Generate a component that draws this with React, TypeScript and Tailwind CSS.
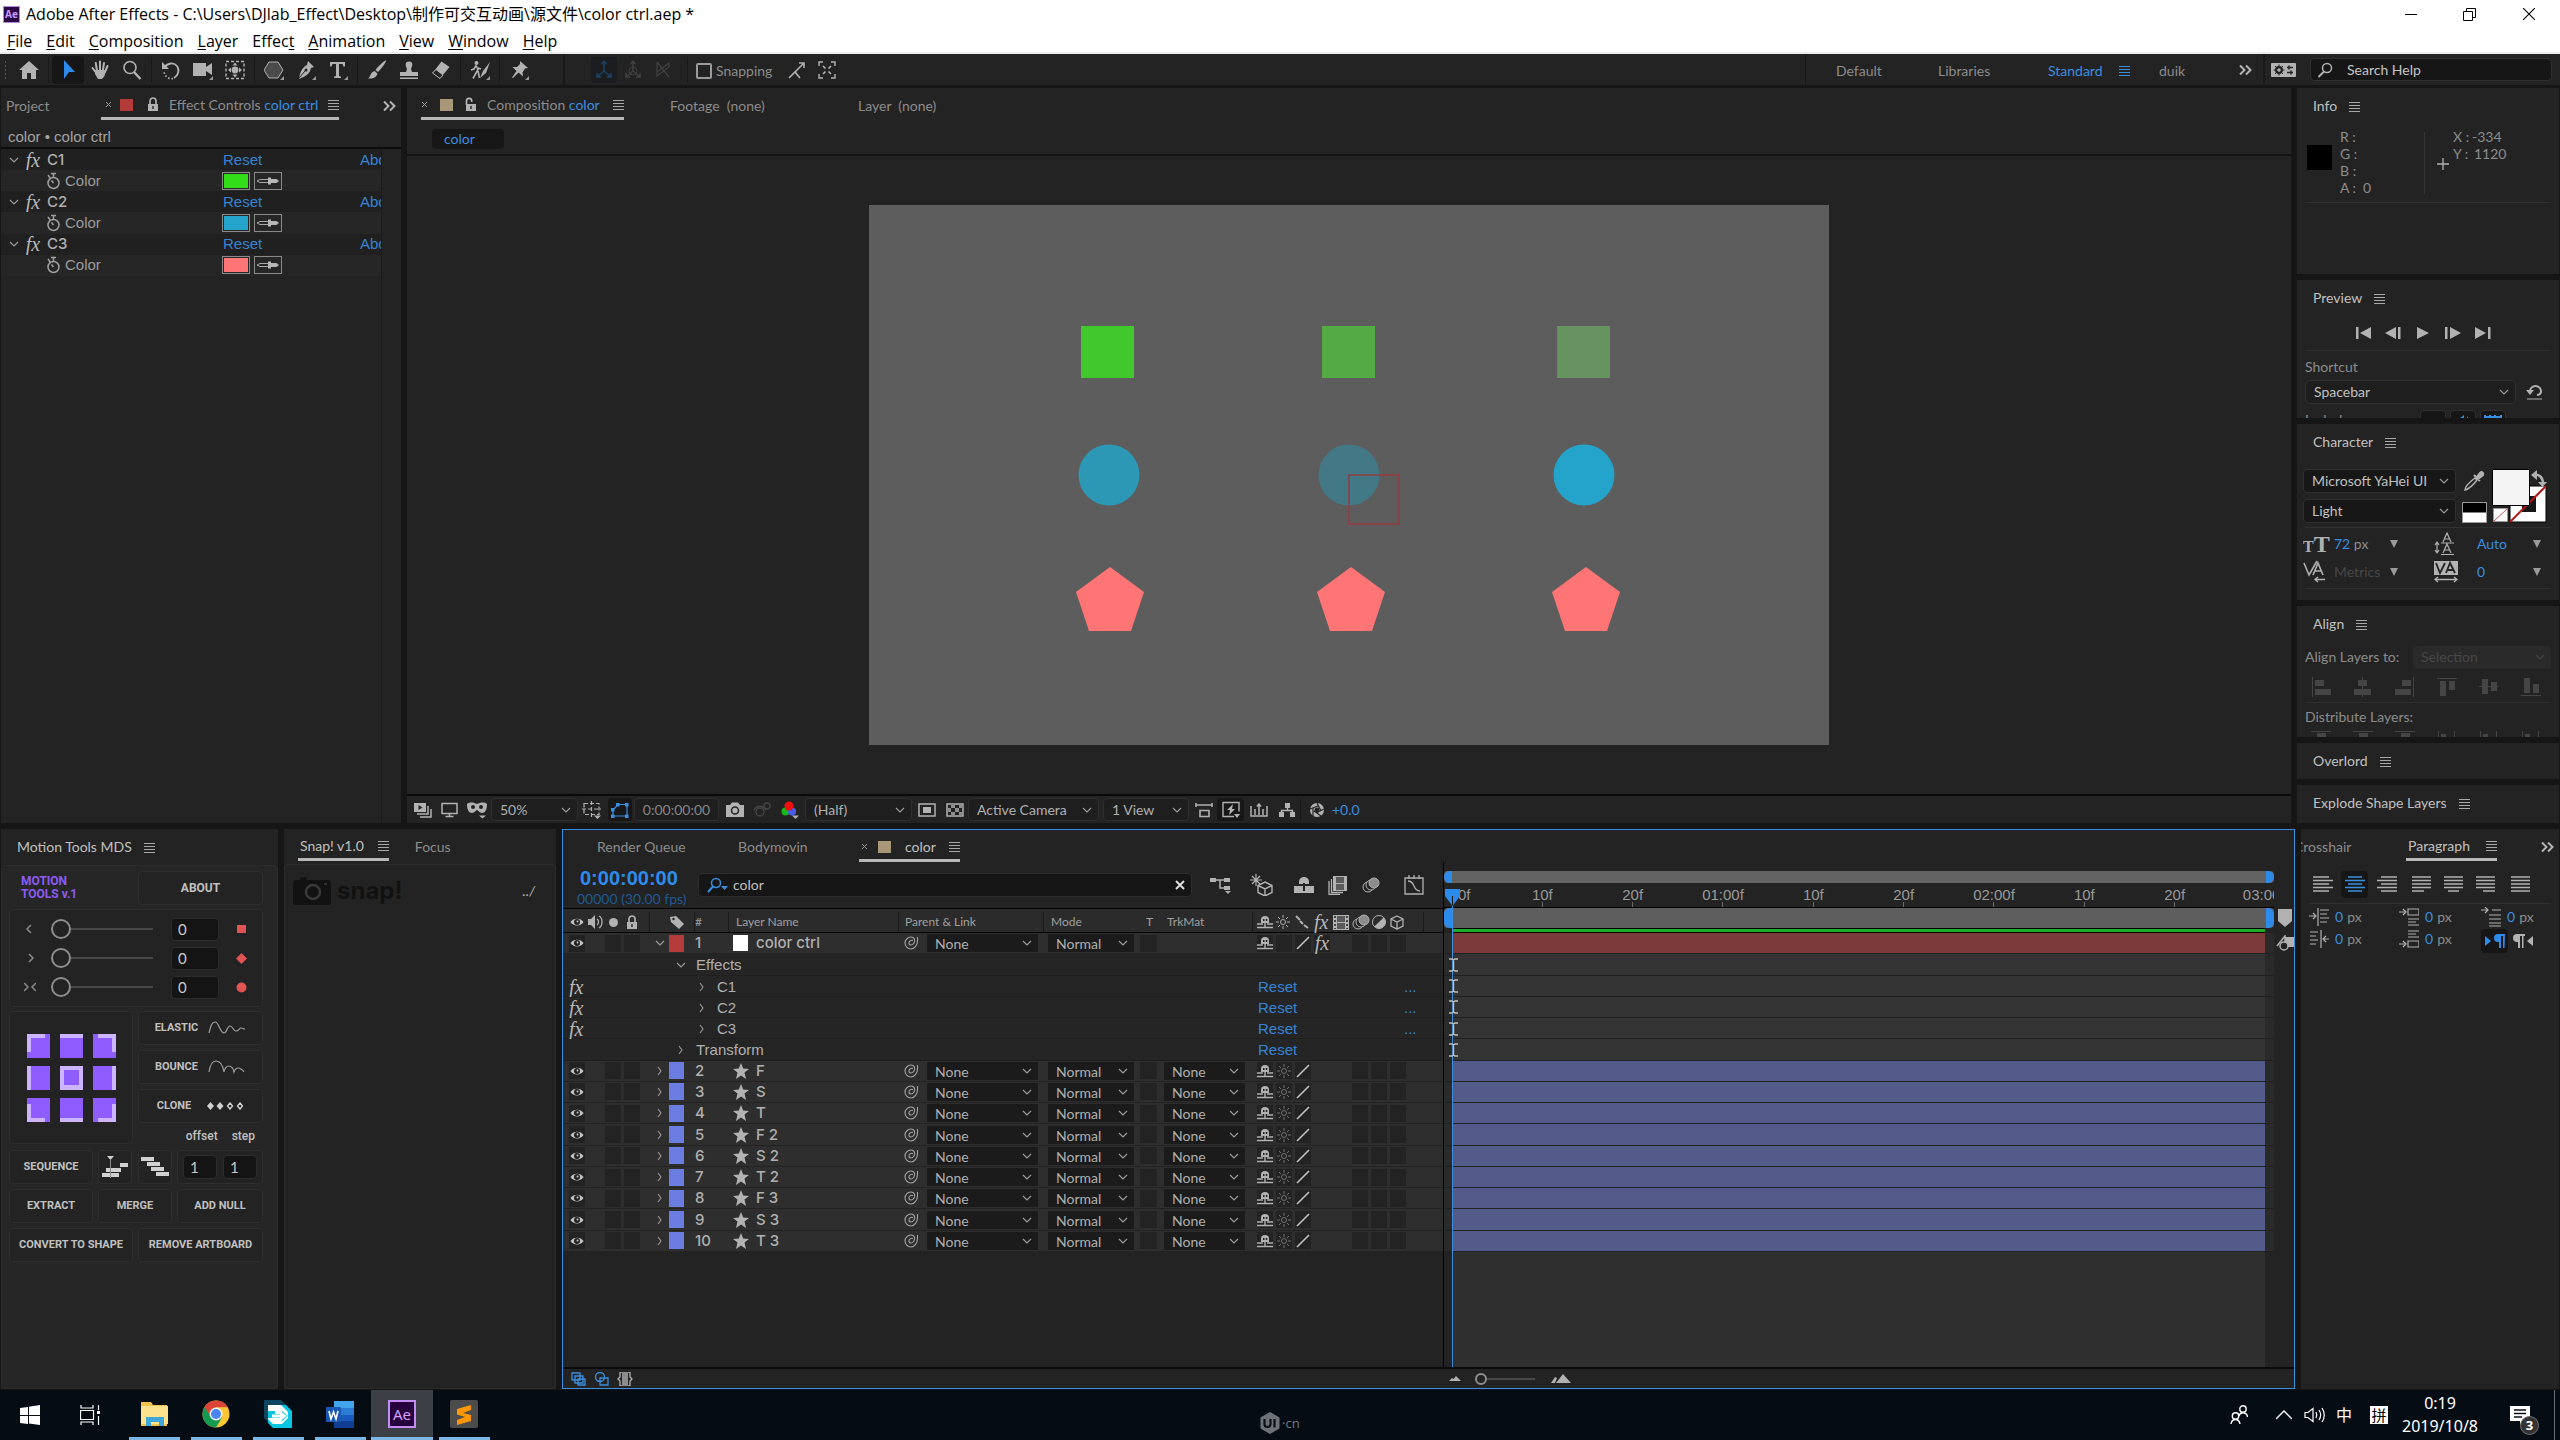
import type { ReactNode } from "react";

type IconProps = {
  w?: number;
  h?: number;
  className?: string;
  children?: ReactNode;
};

function Icon({ w = 20, h = 20, className = "", children }: IconProps) {
  return (
    <svg
      width={w}
      height={h}
      viewBox={`0 0 ${w} ${h}`}
      className={`shrink-0 ${className}`}
      fill="none"
      aria-hidden="true"
    >
      {children}
    </svg>
  );
}

const G = "#b2b2b2";

/* ---------- small shared pieces ---------- */

const MenuLines = ({ className = "text-[#a8a8a8]" }: { className?: string }) => (
  <Icon w={11} h={11} className={className}>
    <path d="M0 1.5h11M0 4.5h11M0 7.5h11M0 10.5h11" stroke="currentColor" />
  </Icon>
);

const Close = () => (
  <Icon w={7} h={7}>
    <path d="M1 1l5 5M6 1l-5 5" stroke="#9a9a9a" />
  </Icon>
);

const Chevron = ({ color = "#9a9a9a" }: { color?: string }) => (
  <Icon w={10} h={6}>
    <path d="M1 1l4 4 4-4" stroke={color} strokeWidth="1.2" />
  </Icon>
);

const ChevronRight = () => (
  <Icon w={6} h={10}>
    <path d="M1 1l3 4-3 4" stroke="#9a9a9a" strokeWidth="1.1" />
  </Icon>
);

const More = () => (
  <Icon w={14} h={12}>
    <path d="M1 1.5l4.5 4.5L1 10.5M7 1.5l4.5 4.5L7 10.5" stroke="#b4b4b4" strokeWidth="2" />
  </Icon>
);

const Corner = () => <path d="M20 16v4h-4z" fill="#9a9a9a" />;

const Lock = ({ open = false }: { open?: boolean }) => (
  <Icon w={12} h={15}>
    <path d={open ? "M1.5 8V4a2.6 2.6 0 015.2 0v1" : "M3 7V4a3 3 0 016 0v3"} stroke={G} strokeWidth="1.7" />
    <rect x="1" y="7" width="10" height="7" fill={G} />
    <path d="M6 9v3" stroke="#232323" strokeWidth="1.4" />
  </Icon>
);

const Fx = () => (
  <span className="font-['Liberation_Serif',serif] text-xl leading-none italic text-[#b8b8b8]">fx</span>
);

const Eye = () => (
  <Icon w={14} h={10}>
    <path d="M.5 5C3 .5 11 .5 13.5 5 11 9.5 3 9.5.5 5z" fill="#c4c4c4" />
    <circle cx="7" cy="5" r="3" fill="#232323" />
    <circle cx="7.5" cy="4.5" r="1" fill="#c4c4c4" />
  </Icon>
);

const Magnifier = () => (
  <Icon w={16} h={16}>
    <circle cx="10" cy="6" r="4.5" stroke={G} strokeWidth="1.5" />
    <path d="M7 9.5L1.5 15" stroke={G} strokeWidth="2" />
  </Icon>
);

type SelectProps = {
  label: string;
  value: string;
  className: string;
  color?: string;
};

function Select({ label, value, className, color }: SelectProps) {
  return (
    <span className={`relative flex items-center ${className}`}>
      <select
        aria-label={label}
        defaultValue={value}
        className="h-full w-full appearance-none bg-transparent pl-2 outline-none"
      >
        <option>{value}</option>
      </select>
      <span className="pointer-events-none absolute right-1.5">
        <Chevron color={color} />
      </span>
    </span>
  );
}

function PanelTitle({ title }: { title: string }) {
  return (
    <div className="flex h-9 shrink-0 items-center gap-3 pl-4 text-[#c0c0c0]">
      <h2>{title}</h2>
      <button type="button" aria-label={`${title} menu`}>
        <MenuLines />
      </button>
    </div>
  );
}

/* ---------- title bar and menus ---------- */

const menus = [
  ["", "F", "ile"],
  ["", "E", "dit"],
  ["", "C", "omposition"],
  ["", "L", "ayer"],
  ["Effec", "t", ""],
  ["", "A", "nimation"],
  ["", "V", "iew"],
  ["", "W", "indow"],
  ["", "H", "elp"],
];

function TitleBar() {
  return (
    <header className="h-[54px] border-b-2 border-[#ececec] bg-white font-['Open_Sans','Noto_Sans_CJK_SC',sans-serif] text-base text-black">
      <div className="flex h-7 items-center">
        <span className="ml-[3px] flex size-[17px] items-center justify-center border border-[#b48ae0] bg-[#2a0845] text-[10px] font-bold text-[#c99bff]">
          Ae
        </span>
        <h1 className="ml-1.5">
          Adobe After Effects - C:\Users\DJlab_Effect\Desktop\制作可交互动画\源文件\color ctrl.aep *
        </h1>
        <div className="ml-auto flex items-center">
          <button type="button" aria-label="Minimize" className="flex w-[58px] justify-center">
            <Icon w={12} h={12}>
              <path d="M0 6.5h12" stroke="#000" />
            </Icon>
          </button>
          <button type="button" aria-label="Restore" className="flex w-[58px] justify-center">
            <Icon w={13} h={13}>
              <path d="M.5 3.5h9v9h-9zM3.5 3.5v-3h9v9h-3" stroke="#000" />
            </Icon>
          </button>
          <button type="button" aria-label="Close" className="flex w-[62px] justify-center">
            <Icon w={12} h={12}>
              <path d="M0 0l12 12M12 0L0 12" stroke="#000" strokeWidth="1.1" />
            </Icon>
          </button>
        </div>
      </div>
      <nav className="flex h-6 items-center gap-3.5 pt-0.5 pl-[7px]">
        {menus.map(([a, b, c]) => (
          <button type="button" key={a + b + c}>
            {a}
            <span className="underline underline-offset-2">{b}</span>
            {c}
          </button>
        ))}
      </nav>
    </header>
  );
}

/* ---------- tool bar ---------- */

const toolGroups: { name: string; art: ReactNode; on?: boolean }[][] = [
  [
    {
      name: "Selection",
      on: true,
      art: <path d="M6 0l11 12h-6l-5 7z" fill="#2d8ceb" />,
    },
    {
      name: "Hand",
      art: (
        <>
          <path d="M5.5 12L2.500 8M7 11L5.800 3M10 10.500V1.500M12.800 11l1.200-8M15 12l2.500-6" stroke={G} strokeWidth="2" strokeLinecap="round" />
          <path d="M5 10h11l-1.500 6-2.500 3H8l-3-5z" fill={G} />
        </>
      ),
    },
    {
      name: "Zoom",
      art: (
        <>
          <circle cx="8" cy="7.5" r="6" stroke={G} strokeWidth="1.6" />
          <path d="M12 12l6.500 7" stroke={G} strokeWidth="2.4" />
        </>
      ),
    },
  ],
  [
    {
      name: "Rotation",
      art: (
        <>
          <path d="M4 7a7.500 7.500 0 0112-1c3 4 1 10-3 12" stroke={G} strokeWidth="1.8" />
          <path d="M12 18.500c-4 1-9-2-9-8" stroke={G} strokeWidth="1.8" strokeDasharray="1.5 2" />
          <path d="M1 2v7h7z" fill={G} />
        </>
      ),
    },
    {
      name: "Unified Camera",
      art: (
        <>
          <path d="M0 3h13v4l6-4v12l-6-4v5H0z" fill={G} />
          <Corner />
        </>
      ),
    },
    {
      name: "Pan Behind",
      art: (
        <>
          <rect x="1" y="1.5" width="18" height="17" stroke={G} strokeWidth="1.4" strokeDasharray="3 2" />
          <circle cx="10" cy="10" r="3.4" fill={G} />
          <path d="M10 2.500l2.500 3h-5zM10 17.500l2.500-3h-5zM3 10l3-2.500v5zM17 10l-3-2.500v5z" fill={G} />
        </>
      ),
    },
  ],
  [
    {
      name: "Shape",
      art: (
        <>
          <path d="M5 2h9l5 8-5 8H5l-5-8z" fill="#4b4b4b" stroke={G} />
          <Corner />
        </>
      ),
    },
    {
      name: "Pen",
      art: (
        <>
          <path d="M12 1l6 6-3 1c-1 5-4 8-12 11 1-8 4-12 8-14z" fill={G} />
          <path d="M3 18l6-7" stroke="#232323" />
          <circle cx="10" cy="10" r="1.5" fill="#232323" />
          <Corner />
        </>
      ),
    },
    {
      name: "Type",
      art: (
        <>
          <path d="M2 2h15v4.500h-1.500L14.500 4H11v12l2 .8V18H6v-1.200L8 16V4H4.500l-1 2.500H2z" fill={G} />
          <Corner />
        </>
      ),
    },
  ],
  [
    {
      name: "Brush",
      art: (
        <path d="M19 .5c1 1-6 10-8 11.500L8.500 10C10.500 7 18-.3 19 .5zM7.500 11l3 2.500c-1 4-5 5.500-9.500 5 3-2 2-6 6.500-7.500z" fill={G} />
      ),
    },
    {
      name: "Clone Stamp",
      art: <path d="M8 9C6 5 6 1.500 10 1.500S14 5 12 9l1 3h6v4H1v-4h6zM1 17.500h18V19H1z" fill={G} />,
    },
    {
      name: "Eraser",
      art: (
        <>
          <path d="M10.500 1.500l8 5.500L9 18.500 1.500 13z" fill={G} />
          <path d="M5 9.500l7 5.500-3 3.500L1.500 13z" fill="#232323" stroke={G} />
        </>
      ),
    },
  ],
  [
    {
      name: "Roto Brush",
      art: (
        <>
          <circle cx="6.5" cy="3" r="2" fill={G} />
          <path d="M6 5.500L4 9 1 10M6 5.500l2 4-5 9M8 11l1.500 7M8 8l3 1" stroke={G} strokeWidth="1.6" />
          <path d="M20 2l-7 9-3 7 6-5z" fill={G} />
          <Corner />
        </>
      ),
    },
  ],
  [
    {
      name: "Puppet Pin",
      art: (
        <>
          <path d="M11 1l8 7-3 .5-2.500 4 .5 4-4.500-4L4 18l-1-.5 4.500-6.500L3.500 7l4.500 0L11 4z" fill={G} />
          <Corner />
        </>
      ),
    },
  ],
];

const Sep = () => <span className="mx-[3px] h-[26px] w-px bg-[#191919]" />;

function ToolBar() {
  return (
    <div className="flex h-[31px] items-center bg-[#232323] text-[#8c8c8c]">
      <span className="ml-1 h-5 w-[3px] bg-[radial-gradient(#555_1px,transparent_1px)] bg-[size:3px_4px]" />
      <button type="button" aria-label="Home" className="ml-1.5 flex h-7 w-8 items-center justify-center">
        <Icon>
          <path d="M10 1l10 9h-3v9h-5v-6H8v6H3v-9H0z" fill={G} />
        </Icon>
      </button>
      {toolGroups.map((group, i) => (
        <div key={i} className="flex items-center">
          <Sep />
          {group.map((tool) => (
            <button
              type="button"
              key={tool.name}
              aria-label={tool.name}
              className={`flex h-7 w-8 items-center justify-center ${tool.on ? "rounded-sm bg-[#161616]" : ""}`}
            >
              <Icon>{tool.art}</Icon>
            </button>
          ))}
        </div>
      ))}
      <span className="ml-7 h-[31px] w-0.5 bg-[#191919]" />
      <span className="ml-[26px] flex h-[26px] w-[26px] items-center justify-center rounded-sm bg-[#1b1d20]">
        <Icon>
          <path d="M10 11V2M10 11l-7 6M10 11l7 6M7.500 4L10 1l2.500 3M3 13v4h4M17 13v4h-4" stroke="#1d4468" strokeWidth="1.4" />
        </Icon>
      </span>
      <Icon className="ml-1.5">
        <path d="M10 11V2M10 11l-7 6M10 11l7 6M7.500 4L10 1l2.500 3M3 13v4h4M17 13v4h-4" stroke="#424242" strokeWidth="1.3" />
        <circle cx="10" cy="11" r="4" stroke="#424242" />
      </Icon>
      <Icon className="ml-2.5">
        <path d="M4 2l12 15M4 2v14l12-9V3L4 12" stroke="#424242" strokeWidth="1.3" />
      </Icon>
      <span className="ml-3.5 h-[26px] w-px bg-[#191919]" />
      <label className="ml-2 flex items-center gap-1 pt-0.5">
        <input type="checkbox" className="size-4 appearance-none rounded-[2px] border-2 border-[#9a9a9a]" />
        Snapping
      </label>
      <Icon w={18} h={18} className="ml-4">
        <path d="M1 17l6-6 5 6M7 11l8-8M11 2h5v5" stroke={G} strokeWidth="1.6" />
      </Icon>
      <Icon w={18} h={18} className="ml-3">
        <path d="M1 5V1h4M13 1h4v4M17 13v4h-4M5 17H1v-4" stroke={G} strokeWidth="1.4" />
        <path d="M5 5l2.500 2.500M13 5l-2.500 2.500M5 13l2.500-2.500M13 13l-2.500-2.500" stroke={G} strokeWidth="1.6" />
      </Icon>

      <nav className="ml-auto flex items-center">
        <span className="h-[31px] w-px bg-[#191919]" />
        <button type="button" className="ml-[30px] w-[102px] pt-0.5 text-left">Default</button>
        <button type="button" className="w-[110px] pt-0.5 text-left">Libraries</button>
        <button type="button" className="flex w-[111px] items-center gap-4 pt-0.5 text-[#3a8ee0]">
          Standard
          <MenuLines className="text-[#3a8ee0]" />
        </button>
        <button type="button" className="w-20 pt-0.5 text-left">duik</button>
        <button type="button" aria-label="More workspaces">
          <More />
        </button>
        <span className="ml-2.5 h-[31px] w-0.5 bg-[#191919]" />
        <button type="button" aria-label="Sync settings" className="ml-1.5">
          <Icon w={25} h={14}>
            <rect width="25" height="14" rx="1" fill={G} />
            <circle cx="8" cy="7" r="3" stroke="#232323" strokeWidth="2" />
            <path d="M8 1.500v11M2.500 7h11M4 3l8 8M12 3l-8 8" stroke="#232323" />
            <circle cx="8" cy="7" r="1.6" fill={G} />
            <path d="M16 4.500h6M16 9.500h6M18 2.500v4M20 7.500v4" stroke="#232323" strokeWidth="1.5" />
          </Icon>
        </button>
        <label className="mr-2 ml-3.5 flex h-[23px] w-[242px] items-center gap-3.5 rounded-sm border border-[#303030] bg-[#161616] pl-1.5">
          <Magnifier />
          <input
            type="text"
            aria-label="Search Help"
            placeholder="Search Help"
            className="w-40 bg-transparent outline-none placeholder:text-[#c4c4c4]"
          />
        </label>
      </nav>
    </div>
  );
}

/* ---------- effect controls ---------- */

const effects = [
  { name: "C1", swatch: "bg-[#32de18]" },
  { name: "C2", swatch: "bg-[#24a3cb]" },
  { name: "C3", swatch: "bg-[#ff7474]" },
];

function EffectControls() {
  return (
    <section className="flex w-[400px] shrink-0 flex-col bg-[#232323]">
      <div className="flex h-9 items-start pl-[5px] text-[#8c8c8c]">
        <button type="button" className="h-8 w-[95px] pt-1 text-left">Project</button>
        <div className="flex h-8 items-center border-b-[3px] border-[#b8b8b8] pt-1 pl-1">
          <Close />
          <span className="ml-2 h-3 w-[13px] bg-[#b53b3b]" />
          <span className="ml-3.5">
            <Lock />
          </span>
          <h2 className="ml-2.5 w-[149px] whitespace-nowrap">
            Effect Controls <span className="text-[#3a8ee0]">color ctrl</span>
          </h2>
          <span className="ml-2.5">
            <MenuLines />
          </span>
        </div>
        <button type="button" aria-label="More panels" className="mt-3 mr-1 ml-auto">
          <More />
        </button>
      </div>
      <div className="flex h-[25px] items-center border-b-2 border-[#0c0c0c] pt-0.5 pl-[7px] font-['Liberation_Sans',sans-serif] text-[15px] text-[#a4a4a4]">
        color • color ctrl
      </div>
      <div className="flex flex-1">
        <div className="grid h-[127px] w-[380px] auto-rows-fr overflow-hidden font-['Liberation_Sans',sans-serif] text-[15px] text-[#9c9c9c]">
          {effects.map((fx) => [
            <div key={fx.name} className="flex items-center bg-[#202020] pl-2">
              <Chevron />
              <span className="ml-1 flex w-5 justify-center">
                <Fx />
              </span>
              <span className="ml-1 w-44 font-['Inter',sans-serif] font-medium text-[#b0b0b0]">{fx.name}</span>
              <button type="button" className="w-[137px] text-left text-[#3584d4]">Reset</button>
              <button type="button" className="w-[21px] overflow-hidden text-left text-[#3584d4]">Abo</button>
            </div>,
            <div key={`${fx.name}-color`} className="flex items-center bg-[#262626] pl-11">
              <Icon w={16} h={18}>
                <circle cx="8.5" cy="11" r="5.5" stroke="#a0a0a0" strokeWidth="1.5" />
                <path d="M8.500 5V2M6 1.500h5M3 3l2.500 3.500M8.500 11l-2-2.500" stroke="#a0a0a0" strokeWidth="1.5" />
              </Icon>
              <span className="ml-1 w-[157px]">Color</span>
              <button type="button" aria-label={`${fx.name} color`} className="h-[18px] w-7 border border-[#8a8a8a] p-px">
                <span className={`block size-full ${fx.swatch}`} />
              </button>
              <button type="button" aria-label={`${fx.name} eyedropper`} className="ml-1 flex h-[18px] w-7 items-center justify-center border border-[#8a8a8a]">
                <Icon w={24} h={10}>
                  <path d="M1 5l3-1.500h9v3H4z" stroke="#a8a8a8" />
                  <path d="M12 1.500h3V3h5a2 2 0 010 4h-5v1.500h-3zM20 4.500h3v1h-3z" fill="#b8b8b8" />
                </Icon>
              </button>
            </div>,
          ])}
        </div>
        <span className="w-px bg-[#1b1b1b]" />
      </div>
    </section>
  );
}

/* ---------- composition viewer ---------- */

const pentagon = "0,0 34,25 21,64 -21,64 -34,25";

function Viewer() {
  return (
    <section className="flex min-w-0 flex-1 flex-col bg-[#232323] text-[#8c8c8c]">
      <div className="flex h-9 items-start pl-3.5">
        <div className="flex h-8 items-center border-b-[3px] border-[#b8b8b8] pt-1">
          <Close />
          <span className="ml-3 h-3 w-[13px] bg-[#a89878]" />
          <span className="ml-3">
            <Lock open />
          </span>
          <h2 className="ml-2.5 w-[114px] whitespace-nowrap">
            Composition <span className="text-[#3a8ee0]">color</span>
          </h2>
          <span className="ml-3">
            <MenuLines />
          </span>
        </div>
        <button type="button" className="ml-[46px] h-8 w-[188px] pt-1 text-left">Footage &nbsp;(none)</button>
        <button type="button" className="h-8 pt-1">Layer &nbsp;(none)</button>
      </div>
      <div className="flex h-8 items-center border-b-2 border-[#141414] pl-[25px]">
        <button type="button" className="h-5 w-[72px] rounded-sm bg-[#171717] pl-3 text-left text-[#3a8ee0]">
          color
        </button>
      </div>
      <div className="flex flex-1 items-center justify-center border-b-2 border-[#0a0a0a]">
        <svg viewBox="0 0 960 540" className="w-[960px] bg-[#5d5d5d]" role="img" aria-label="Composition frame">
          <rect x="212" y="121" width="53" height="52" fill="#41c82c" />
          <rect x="453" y="121" width="53" height="52" fill="#54ab45" />
          <rect x="688" y="121" width="53" height="52" fill="#66935f" />
          <circle cx="240" cy="270" r="30.5" fill="#2c98b6" />
          <circle cx="480" cy="270" r="30.5" fill="#437887" />
          <circle cx="715" cy="270" r="30.5" fill="#24a3cb" />
          {[241, 482, 717].map((x) => (
            <polygon key={x} points={pentagon} transform={`translate(${x} 362)`} fill="#ff7474" />
          ))}
          <rect x="480" y="270" width="50" height="49" fill="none" stroke="#943c42" strokeWidth="1.5" />
        </svg>
      </div>
      <ViewerBar />
    </section>
  );
}

const barField = "h-[23px] rounded-sm border border-[#2e2e2e] bg-[#1e1e1e]";

function ViewerBar() {
  return (
    <div className="flex h-[27px] items-center pl-1.5 text-[#b0b0b0]">
      <Icon w={20} h={16}>
        <path d="M1 1h12v9H1z" fill={G} />
        <path d="M5.500 3l4 2.500-4 2.500z" fill="#232323" />
        <path d="M15 4v8H4M18 7v8H7" stroke={G} strokeWidth="1.5" />
      </Icon>
      <Icon w={18} h={16} className="ml-2">
        <path d="M1 1.500h15v10H1zM8.500 12v2M4.500 14.500h8" stroke={G} strokeWidth="1.5" />
      </Icon>
      <Icon w={22} h={18} className="ml-2">
        <path d="M0 3c3-2.500 7-1.500 10 0 3-1.500 7-2.500 10 0 0 6-2 9-5 9-2.500 0-4-3-5-3s-2.500 3-5 3C2 12 0 9 0 3z" fill={G} />
        <circle cx="6" cy="6" r="2" fill="#232323" />
        <circle cx="14" cy="6" r="2" fill="#232323" />
        <path d="M12 14.500h7l-3.500 3z" fill={G} />
      </Icon>
      <Select label="Magnification" value="50%" className={`ml-0.5 w-[87px] ${barField}`} />
      <Icon w={20} h={18} className="ml-1">
        <path d="M2 2.500h15v11H2zM9.500 0v16M0 8h19" stroke={G} strokeWidth="1.2" strokeDasharray="4 2" />
        <path d="M12 14.500h7l-3.500 3.500z" fill={G} />
      </Icon>
      <span className="ml-1.5 flex h-[23px] w-6 items-center justify-center rounded-sm bg-[#171717]">
        <Icon w={18} h={16}>
          <path d="M2 14V8l5-5.500h9V14z" stroke="#3a8ee0" strokeWidth="1.2" />
          <path d="M0 12.500h3.500V16H0zM0 6h3.500v3.500H0zM5 1h3.500v3.500H5zM14 1h3.500v3.500H14zM14 12.500h3.500V16H14z" fill="#3a8ee0" />
        </Icon>
      </span>
      <button type="button" className={`ml-0.5 w-[85px] text-[#858585] ${barField}`}>
        0:00:00:00
      </button>
      <Icon w={20} h={16} className="ml-1.5">
        <path d="M1 3h4l2-2.500h6L15 3h4v12H1z" fill={G} />
        <circle cx="10" cy="8.5" r="3.5" stroke="#232323" strokeWidth="1.5" />
      </Icon>
      <Icon w={20} h={16} className="ml-2">
        <circle cx="7" cy="10" r="4" stroke="#454545" strokeWidth="1.5" />
        <circle cx="14" cy="4" r="3" stroke="#454545" strokeWidth="1.5" />
        <path d="M1 8c3-5 9-5 12 0" stroke="#454545" strokeWidth="1.5" />
      </Icon>
      <Icon w={18} h={18} className="ml-2">
        <circle cx="4.5" cy="10.5" r="4" fill="#18b818" />
        <circle cx="11" cy="10.5" r="4" fill="#4a5bf0" />
        <circle cx="8" cy="5" r="4.5" fill="#f01010" />
        <path d="M11 14.500h7l-3.500 3.500z" fill={G} />
      </Icon>
      <Select label="Resolution" value="(Half)" className={`ml-1.5 w-[107px] ${barField}`} />
      <Icon w={18} h={14} className="ml-1.5">
        <rect x="1" y="1" width="16" height="12" stroke={G} strokeWidth="1.5" />
        <rect x="5" y="4" width="8" height="6" fill={G} />
      </Icon>
      <Icon w={18} h={14} className="ml-2.5">
        <rect x="1" y="1" width="16" height="12" stroke={G} strokeWidth="1.5" />
        <path d="M5 2h4v3H5zM13 2h3v3h-3zM2 5h3v4H2zM9 5h4v4H9zM5 9h4v3H5zM13 9h3v3h-3z" fill="#8e8e8e" />
      </Icon>
      <Select label="3D view" value="Active Camera" className={`ml-1 w-[131px] ${barField}`} />
      <Select label="View layout" value="1 View" className={`ml-1 w-[86px] ${barField}`} />
      <Icon w={18} h={16} className="ml-1.5">
        <path d="M1 3h16M1 1v4M17 1v4M5 8.500h9v6H5z" stroke={G} strokeWidth="1.6" />
      </Icon>
      <span className="ml-1 flex h-[23px] w-[27px] items-center justify-center rounded-sm bg-[#171717]">
        <Icon w={18} h={17}>
          <path d="M12 15.500H1v-14h16v9" stroke={G} strokeWidth="1.4" />
          <path d="M11 3L5 9h3l-1 5 6-6h-3z" fill={G} />
          <path d="M12 13h6l-3 4z" fill={G} />
        </Icon>
      </span>
      <Icon w={18} h={14} className="ml-1.5">
        <path d="M1 3v10h16V3M5 6v6M9 1v11M13 6v6M7 3.500L9 1l2 2.500" stroke={G} strokeWidth="1.5" />
      </Icon>
      <Icon w={18} h={16} className="ml-2.5">
        <path d="M7 1h5v5H7zM1 10h5v5H1zM12 10h5v5h-5z" fill={G} />
        <path d="M9.500 6v2.500M3.500 11V8.500h11V11" stroke={G} strokeWidth="1.4" />
      </Icon>
      <span className="ml-1 h-[23px] w-px bg-[#191919]" />
      <Icon w={16} h={16} className="ml-2">
        <circle cx="8" cy="8" r="7" fill={G} />
        <path d="M8 1l4 8M15 7l-8 4M12 14L5 9M4 14l0-8M1 7l8-3" stroke="#232323" strokeWidth="1.2" />
        <circle cx="8" cy="8" r="2.5" fill="#232323" />
      </Icon>
      <button type="button" className="ml-[7px] text-[#3a8ee0]">+0.0</button>
    </div>
  );
}

/* ---------- right column ---------- */

const Rule = () => <hr className="mx-2 border-[#303030]" />;

const transport: { name: string; d: string }[] = [
  { name: "First frame", d: "M1 1h2.5v12H1zM16 1v12L5 7z" },
  { name: "Previous frame", d: "M11 1v12L0 7zM13 1h2.5v12H13z" },
  { name: "Play", d: "M2 1l12 6-12 6z" },
  { name: "Next frame", d: "M0 1h2.5v12H0zM5 1l11 6-11 6z" },
  { name: "Last frame", d: "M0 1l11 6-11 6zM13 1h2.5v12H13z" },
];

const alignArt = [
  "M1 0h1v20H1zM4 3h9v6H4zM4 12h16v6H4z",
  "M9 0h1v20H9zM5 3h9v6H5zM1 12h17v6H1z",
  "M18 0h1v20h-1zM7 3h9v6H7zM0 12h16v6H0z",
  "M0 1h20v1H0zM3 4h6v15H3zM12 4h6v9h-6z",
  "M0 9h20v1H0zM3 2h6v15H3zM12 5h6v9h-6z",
  "M0 18h20v1H0zM3 1h6v15H3zM12 7h6v9h-6z",
];

function SideColumn() {
  return (
    <aside className="flex w-[262px] shrink-0 flex-col gap-1.5 text-[#8c8c8c]">
      <section className="h-[186px] bg-[#232323]">
        <PanelTitle title="Info" />
        <div className="flex h-[78px] pt-1">
          <span className="mt-[17px] ml-2.5 size-[25px] bg-black" />
          <dl className="ml-2 grid w-[84px] grid-cols-[23px_1fr] content-start leading-[17px]">
            <dt>R :</dt>
            <dd />
            <dt>G :</dt>
            <dd />
            <dt>B :</dt>
            <dd />
            <dt>A :</dt>
            <dd>0</dd>
          </dl>
          <span className="mt-1 h-[62px] w-px bg-[#343434]" />
          <Icon w={12} h={12} className="mt-[30px] ml-3">
            <path d="M0 6h12M6 0v12" stroke={G} strokeWidth="1.3" />
          </Icon>
          <dl className="ml-1 grid grid-cols-[19px_1fr] content-start leading-[17px]">
            <dt>X :</dt>
            <dd>-334</dd>
            <dt>Y :</dt>
            <dd className="pl-0.5">1120</dd>
          </dl>
        </div>
        <Rule />
      </section>

      <section className="h-[138px] overflow-hidden bg-[#232323]">
        <PanelTitle title="Preview" />
        <div className="flex h-[34px] items-center gap-3.5 pl-[58px]">
          {transport.map((t) => (
            <button type="button" key={t.name} aria-label={t.name}>
              <Icon w={16} h={14}>
                <path d={t.d} fill={G} />
              </Icon>
            </button>
          ))}
        </div>
        <Rule />
        <p className="h-[29px] pl-2 leading-8">Shortcut</p>
        <div className="flex items-center pl-2 text-[#c0c0c0]">
          <Select label="Shortcut" value="Spacebar" className="h-6 w-[211px] rounded-sm border border-[#303030] bg-[#1e1e1e]" />
          <Icon w={18} h={16} className="ml-2.5">
            <path d="M4 7a5.500 5.500 0 1111 1c-.5 2-2 3-4 3" stroke={G} strokeWidth="2" />
            <path d="M0 6h8L4 11z" fill={G} />
            <path d="M1 15h15" stroke={G} />
          </Icon>
        </div>
        <div className="mt-1.5 flex gap-1 pl-2 leading-5">
          <span className="w-[111px]">Include:</span>
          <span className="h-6 w-[26px] rounded-sm border border-[#303030] bg-[#161616]" />
          <span className="flex h-6 w-[26px] justify-center rounded-sm border border-[#303030] bg-[#161616] pt-1">
            <Icon w={14} h={14}>
              <path d="M3 4l5-4v10L3 8zM11 1c2 3 2 5 0 8" fill="#3a8ee0" />
            </Icon>
          </span>
          <span className="flex h-6 w-[26px] justify-center rounded-sm border border-[#303030] bg-[#161616] pt-1">
            <Icon w={18} h={12}>
              <path d="M0 2h18M1 0v12M6 0v2M11 0v2M17 0v12" stroke="#3a8ee0" strokeWidth="2" />
            </Icon>
          </span>
        </div>
      </section>

      <CharacterPanel />

      <section className="h-[131px] overflow-hidden bg-[#232323]">
        <PanelTitle title="Align" />
        <div className="flex h-[30px] items-center pl-2">
          <span className="w-[108px] text-[#8c8c8c]">Align Layers to:</span>
          <Select label="Align Layers to" value="Selection" color="#454545" className="h-[23px] w-[138px] rounded-sm bg-[#2a2a2a] text-[#484848]" />
        </div>
        <div className="flex h-[30px] items-center gap-[22px] pl-3.5">
          {alignArt.map((d) => (
            <Icon key={d} w={20} h={20}>
              <path d={d} fill="#454545" />
            </Icon>
          ))}
        </div>
        <Rule />
        <p className="h-7 pl-2 leading-7">Distribute Layers:</p>
        <div className="flex items-center gap-[22px] pl-3.5">
          {alignArt.map((d, i) => (
            <Icon key={d} w={20} h={20}>
              <path d={i < 3 ? "M0 0h20v1H0zM6 2h9v6H6z" : "M1 0h1v20H1zM17 0h1v20h-1zM4 3h5v15H4z"} fill="#454545" />
            </Icon>
          ))}
        </div>
      </section>

      <section className="bg-[#232323]">
        <PanelTitle title="Overlord" />
      </section>
      <section className="flex-1 bg-[#232323]">
        <PanelTitle title="Explode Shape Layers" />
      </section>
    </aside>
  );
}

const Down = () => (
  <Icon w={8} h={8}>
    <path d="M0 0h8L4 8z" fill="#9a9a9a" />
  </Icon>
);

const glyph = "font-['Liberation_Serif',serif] font-bold leading-none text-[#b2b2b2]";

function CharacterPanel() {
  return (
    <section className="h-[176px] bg-[#232323]">
      <PanelTitle title="Character" />
      <div className="flex pt-[9px] pl-1.5">
        <div className="flex w-[153px] flex-col gap-1.5 text-[#c0c0c0]">
          <Select label="Font family" value="Microsoft YaHei UI" className="h-6 rounded-sm border border-[#303030] bg-[#171717]" />
          <Select label="Font style" value="Light" className="h-6 rounded-sm border border-[#303030] bg-[#171717]" />
        </div>
        <div className="ml-1.5 flex w-[30px] flex-col justify-between">
          <Icon w={24} h={24}>
            <path d="M3 21c0-4 6-9 10-12l2 2c-3 4-8 9-12 10z" stroke={G} strokeWidth="1.5" />
            <path d="M12 6l6 6M14 9l4-5c2-2 4 0 3 2l-5 4z" stroke={G} strokeWidth="2" fill={G} />
          </Icon>
          <Icon w={25} h={21}>
            <path d="M.5.5h24v20H.5z" fill="#fff" stroke="#999" />
            <path d="M1 1h23v9.500H1z" fill="#000" />
          </Icon>
        </div>
        <Icon w={56} h={54}>
          <path d="M18 17h36v36H18z" fill="#fff" stroke="#000" />
          <path d="M30 27h14v16H30z" fill="#171717" />
          <path d="M18 53l36-36" stroke="#b01818" strokeWidth="2" />
          <path d="M.5.5h37v36H.5z" fill="#f4f4f4" stroke="#000" />
          <path d="M1.500 39.500h14v13h-14z" fill="#fff" stroke="#999" />
          <path d="M2 52l13-12" stroke="#c05050" />
          <path d="M42 6c5-1 9 2 9 9" stroke={G} strokeWidth="2.5" />
          <path d="M39 6l6-5v10zM46 13h9l-4.500 5z" fill={G} />
        </Icon>
      </div>
      <div className="mt-1">
        <Rule />
      </div>
      <div className="grid grid-cols-[31px_56px_44px_43px_56px_1fr] items-center gap-y-1 pt-1 pl-1.5">
        <span className={glyph}>
          <span className="text-base leading-none">T</span>
          <span className="text-2xl leading-none">T</span>
        </span>
        <span>
          <a href="#size" className="text-[#3a8ee0]">72</a> px
        </span>
        <Down />
        <span className="flex items-center">
          <Icon w={20} h={24}>
            <path d="M3 10v11M1 13l2-3 2 3M1 18l2 3 2-3M9 10l4-9 4 9M10.500 7h5M9 21l4-9 4 9M10.500 18h5M7 11h13M7 22.500h13" stroke={G} strokeWidth="1.2" />
          </Icon>
        </span>
        <a href="#leading" className="text-[#3a8ee0]">Auto</a>
        <Down />
        <Icon w={24} h={24}>
          <path d="M1 3l5 12L14 1M10 15l5-12 5 12M12 11h6" stroke={G} strokeWidth="1.6" />
          <path d="M12 19.500h10M15 17l-3 2.500 3 2.500" stroke={G} strokeWidth="1.4" />
        </Icon>
        <span className="text-[#484848]">Metrics</span>
        <Down />
        <Icon w={24} h={24}>
          <path d="M0 1h24v14H0z" fill={G} />
          <path d="M2 3l4 10 5-10M12 13l4-10 5 10M14 10h5" stroke="#232323" strokeWidth="1.8" />
          <path d="M1 19.500h22M4 17l-3 2.500 3 2.500M20 17l3 2.500-3 2.500" stroke={G} strokeWidth="1.4" />
        </Icon>
        <a href="#tracking" className="text-[#3a8ee0]">0</a>
        <Down />
      </div>
      <div className="mt-1">
        <Rule />
      </div>
    </section>
  );
}

/* ---------- motion tools ---------- */

const boxed = "flex h-[34px] items-center justify-center rounded-sm border border-[#2e2e2e] bg-[#232323]";
const field = "rounded-sm border border-[#2c2c2c] bg-[#141414] pl-1.5 text-[15px] text-[#c8c8c8] outline-none";

const sliders = [
  {
    name: "Ease in",
    art: <path d="M7 2L3 6l4 4" stroke="#8a8a8a" strokeWidth="1.5" />,
    mark: <path d="M1 1h9v8H1z" fill="#e25454" />,
  },
  {
    name: "Ease out",
    art: <path d="M5 2l4 4-4 4" stroke="#8a8a8a" strokeWidth="1.5" />,
    mark: <path d="M5.500 0L11 5.500 5.500 11 0 5.500z" fill="#e25454" />,
  },
  {
    name: "Ease both",
    art: <path d="M0 2l4 4-4 4M12 2L8 6l4 4" stroke="#8a8a8a" strokeWidth="1.5" />,
    mark: <circle cx="5.5" cy="5.5" r="5" fill="#e25454" />,
  },
];

// highlight drawn over each anchor square
const anchors = [
  "M0 0h18v4H4v14H0z",
  "M0 0h23v4H0z",
  "M5 0h18v18h-4V4H5z",
  "M0 0h4v24H0z",
  "M0 0h23v24H0zM4 4v15h15V4z",
  "M19 0h4v24h-4z",
  "M0 6h4v14h14v4H0z",
  "M0 20h23v4H0z",
  "M19 6h4v18H5v-4h14z",
];

function MotionTools() {
  return (
    <section className="flex w-[277px] shrink-0 flex-col bg-[#232323]">
      <PanelTitle title="Motion Tools MDS" />
      <div className="flex-1 rounded-sm border border-[#2c2c2c] bg-[#262626] pt-[5px] pr-3.5 pl-[7px] font-['Roboto',sans-serif] text-[11px] font-bold text-[#c0c0c0]">
        <div className="flex h-[38px] items-start justify-between">
          <p className="pt-1 pl-3 text-xs leading-[13px] text-[#8d5cf6]">
            MOTION
            <br />
            TOOLS v.1
          </p>
          <button type="button" className={`${boxed} w-[125px] text-xs`}>ABOUT</button>
        </div>
        <div className="flex h-[98px] flex-col justify-center gap-1.5 rounded-sm border border-[#2e2e2e] bg-[#232323] pl-3.5">
          {sliders.map((s) => (
            <div key={s.name} className="flex h-[23px] items-center">
              <Icon w={12} h={12}>{s.art}</Icon>
              <input
                type="range"
                aria-label={s.name}
                defaultValue={0}
                className="ml-[15px] h-5 w-[102px] appearance-none bg-transparent [&::-webkit-slider-runnable-track]:h-0.5 [&::-webkit-slider-runnable-track]:bg-[#484848] [&::-webkit-slider-thumb]:-mt-[9px] [&::-webkit-slider-thumb]:size-5 [&::-webkit-slider-thumb]:appearance-none [&::-webkit-slider-thumb]:rounded-full [&::-webkit-slider-thumb]:border-2 [&::-webkit-slider-thumb]:border-[#8e8e8e] [&::-webkit-slider-thumb]:bg-[#232323]"
              />
              <input type="text" aria-label={`${s.name} value`} defaultValue="0" className={`${field} ml-[18px] h-[23px] w-12 font-['Lato',sans-serif] font-normal`} />
              <Icon w={11} h={11} className="ml-[17px]">{s.mark}</Icon>
            </div>
          ))}
        </div>
        <div className="mt-1 flex justify-between">
          <div className="flex h-[133px] w-[124px] items-center justify-center rounded-sm border border-[#2e2e2e] bg-[#232323]">
            <div className="grid grid-cols-3 gap-x-2.5 gap-y-2">
              {anchors.map((d) => (
                <button type="button" key={d} aria-label="Anchor point">
                  <Icon w={23} h={24}>
                    <path d="M0 0h23v24H0z" fill="#8f5cff" />
                    <path d={d} fill="#cdb4ff" fillRule="evenodd" />
                  </Icon>
                </button>
              ))}
            </div>
          </div>
          <div className="flex w-[125px] flex-col gap-[5px]">
            <button type="button" className={`${boxed} gap-2.5`}>
              ELASTIC
              <Icon w={38} h={14}>
                <path d="M1 12C3 4 4 1 7 1c4 0 5 11 9 11 3 0 3-7 6-7s3 5 6 5 3-3 5-3 2 1 4 1" stroke="#a0a0a0" strokeWidth="1.2" />
              </Icon>
            </button>
            <button type="button" className={`${boxed} gap-2.5`}>
              BOUNCE
              <Icon w={38} h={14}>
                <path d="M1 12C2 5 4 1 8 1c5 0 7 5 8 11 1-5 3-6 5-6s4 2 5 6c1-3 2-4 4-4s5 2 6 4" stroke="#a0a0a0" strokeWidth="1.2" />
              </Icon>
            </button>
            <button type="button" className={`${boxed} gap-4`}>
              CLONE
              <Icon w={37} h={8}>
                <path d="M3.500 0L7 4 3.500 8 0 4zM13 0l3.500 4L13 8 9.500 4z" fill="#d0d0d0" />
                <path d="M23 1l2.500 3L23 7l-2.500-3zM33 1l2.500 3L33 7l-2.500-3z" stroke="#d0d0d0" strokeWidth="1.4" />
              </Icon>
            </button>
            <div className="flex justify-end gap-3.5 pr-2 text-xs leading-4 font-medium">
              <span>offset</span>
              <span>step</span>
            </div>
          </div>
        </div>
        <div className="mt-1.5 flex justify-between">
          <button type="button" className={`${boxed} w-[84px]`}>SEQUENCE</button>
          <button type="button" aria-label="Sequence at playhead" className={`${boxed} w-[34px]`}>
            <Icon w={26} h={22}>
              <path d="M5 0h7L8.500 4zM18 7h8v4h-8zM4 12h15v4H4zM0 17h17v4H0z" fill="#d0d0d0" />
              <path d="M8.500 3v19" stroke="#8a8a8a" />
            </Icon>
          </button>
          <button type="button" aria-label="Sequence layers" className={`${boxed} w-[34px]`}>
            <Icon w={28} h={22}>
              <path d="M0 1h13v4H0zM6 6h13v4H6zM10 11h13v4H10zM15 16h13v4H15z" fill="#d0d0d0" />
            </Icon>
          </button>
          <div className={`${boxed} w-[86px] gap-1.5`}>
            <input type="text" aria-label="offset" defaultValue="1" className={`${field} h-6 w-[34px] font-['Lato',sans-serif] font-normal`} />
            <input type="text" aria-label="step" defaultValue="1" className={`${field} h-6 w-[34px] font-['Lato',sans-serif] font-normal`} />
          </div>
        </div>
        <div className="mt-[5px] flex justify-between">
          <button type="button" className={`${boxed} w-[84px]`}>EXTRACT</button>
          <button type="button" className={`${boxed} w-[74px]`}>MERGE</button>
          <button type="button" className={`${boxed} w-[86px]`}>ADD NULL</button>
        </div>
        <div className="mt-[5px] flex justify-between">
          <button type="button" className={`${boxed} w-[124px]`}>CONVERT TO SHAPE</button>
          <button type="button" className={`${boxed} w-[125px]`}>REMOVE ARTBOARD</button>
        </div>
      </div>
    </section>
  );
}

function SnapPanel() {
  return (
    <section className="flex w-[272px] shrink-0 flex-col bg-[#232323]">
      <div className="flex h-[35px] items-start pl-3.5">
        <div className="flex h-8 items-center gap-3.5 border-b-[3px] border-[#b8b8b8] pt-1 pl-0.5 text-[#c0c0c0]">
          <h2>Snap! v1.0</h2>
          <MenuLines />
        </div>
        <button type="button" className="ml-[26px] h-8 pt-1 text-[#8c8c8c]">Focus</button>
      </div>
      <div className="flex-1 rounded-sm border border-[#2c2c2c] pt-2.5 pr-5 pl-2">
        <div className="flex items-center">
          <Icon w={38} h={30}>
            <path d="M3 4h4l1-3h5l1 3h21q3 0 3 3v19q0 3-3 3H3q-3 0-3-3V7q0-3 3-3z" fill="#121212" />
            <circle cx="20" cy="16" r="7" stroke="#3a3a3a" strokeWidth="2.5" />
            <path d="M31 8h3" stroke="#4a4a4a" />
          </Icon>
          <span className="ml-1.5 font-['Inter',sans-serif] text-2xl leading-8 font-bold text-[#121212]">snap!</span>
          <span className="ml-auto text-[#b8b8b8] italic">../</span>
        </div>
      </div>
    </section>
  );
}

/* ---------- timeline ---------- */

type Row =
  | { kind: "layer"; num: number; name: string; main?: boolean }
  | { kind: "prop"; name: string; open?: boolean; fx?: boolean; reset?: boolean };

const rows: Row[] = [
  { kind: "layer", num: 1, name: "color ctrl", main: true },
  { kind: "prop", name: "Effects", open: true },
  { kind: "prop", name: "C1", fx: true, reset: true },
  { kind: "prop", name: "C2", fx: true, reset: true },
  { kind: "prop", name: "C3", fx: true, reset: true },
  { kind: "prop", name: "Transform", reset: true },
  { kind: "layer", num: 2, name: "F" },
  { kind: "layer", num: 3, name: "S" },
  { kind: "layer", num: 4, name: "T" },
  { kind: "layer", num: 5, name: "F 2" },
  { kind: "layer", num: 6, name: "S 2" },
  { kind: "layer", num: 7, name: "T 2" },
  { kind: "layer", num: 8, name: "F 3" },
  { kind: "layer", num: 9, name: "S 3" },
  { kind: "layer", num: 10, name: "T 3" },
];

const columns =
  "grid grid-cols-[42px_19px_26px_19px_26px_38px_23px_1fr_24px_121px_92px_24px_93px_repeat(8,19px)_34px] items-center";

const Cell = ({ children }: { children?: ReactNode }) => (
  <span className="flex h-[17px] w-4 items-center justify-center bg-[#232323]">{children}</span>
);

const Shy = () => (
  <Icon w={16} h={14}>
    <path d="M4 8V4.500a4 3.500 0 018 0V8z" fill={G} />
    <path d="M6 4h1.500v2H6zM8.800 4h1.500v2H8.800z" fill="#232323" />
    <path d="M0 9h6M10 9h6M0 12.500h16M8 7v6" stroke={G} strokeWidth="1.4" />
  </Icon>
);

const Sun = ({ color }: { color: string }) => (
  <Icon w={14} h={14}>
    <circle cx="7" cy="7" r="2.5" stroke={color} />
    <path d="M7 0v3M7 11v3M0 7h3M11 7h3M2 2l2 2M10 10l2 2M2 12l2-2M10 4l2-2" stroke={color} />
  </Icon>
);

const Slash = () => (
  <Icon w={14} h={14}>
    <path d="M1 13L13 1" stroke="#c4c4c4" strokeWidth="1.6" />
  </Icon>
);

const Film = () => (
  <Icon w={16} h={15}>
    <path d="M0 0h16v15H0z" fill={G} />
    <path d="M4 1h8v6H4zM4 8h8v6H4z" fill="#5a5a5a" />
    <path d="M2 1v13M14 1v13" stroke="#232323" strokeWidth="1.5" strokeDasharray="2 2" />
  </Icon>
);

const Blur = () => (
  <Icon w={18} h={16}>
    <circle cx="6" cy="10" r="5" stroke={G} />
    <circle cx="9" cy="8" r="5" stroke={G} fill="#232323" />
    <circle cx="12" cy="6" r="5" fill="#8c8c8c" stroke={G} />
  </Icon>
);

const Cube = () => (
  <Icon w={14} h={15}>
    <path d="M7 1l6 3v7l-6 3-6-3V4zM1 4l6 3 6-3M7 7v7" stroke={G} strokeWidth="1.3" />
  </Icon>
);

// pick whip spiral
const Swirl = () => (
  <Icon w={16} h={16}>
    <path d="M10 5.500c-2-1-4.500 1-4 3s3.500 2 5-.5.500-6-3-6-6 3-6 6 2.500 6 6 6 6.500-4 6.500-8.500V2" stroke="#a4a4a4" strokeWidth="1.1" />
  </Icon>
);

function LayerRow({ row }: { row: Extract<Row, { kind: "layer" }> }) {
  return (
    <div className={`${columns} border-b border-[#232323] bg-[#2e2e2e]`}>
      <span className="pl-1.5">
        <Cell>
          <Eye />
        </Cell>
      </span>
      <Cell />
      <Cell />
      <span className="flex justify-center">{row.main ? <Chevron /> : <ChevronRight />}</span>
      <span className={`h-[17px] w-[15px] ${row.main ? "bg-[#b53b3b]" : "bg-[#6b7de0]"}`} />
      <span className="font-['Inter',sans-serif] text-[15px] font-medium">{row.num}</span>
      {row.main ? (
        <span className="h-4 w-[15px] bg-white" />
      ) : (
        <Icon w={16} h={16}>
          <path d="M8 0l2.200 5.500 5.800.4-4.500 3.700L13 16l-5-3.500L3 16l1.500-6.400L0 5.900l5.800-.4z" fill={G} />
        </Icon>
      )}
      <span className="font-['Inter',sans-serif] text-[15px] font-medium">{row.name}</span>
      <Swirl />
      <Select label={`Parent of layer ${row.num}`} value="None" className="h-[18px] w-[111px] bg-[#1b1b1b]" />
      <Select label={`Mode of layer ${row.num}`} value="Normal" className="h-[18px] w-[86px] bg-[#1b1b1b]" />
      <span className="h-[17px] w-[17px] bg-[#232323]" />
      {row.main ? (
        <span />
      ) : (
        <Select label={`Track matte of layer ${row.num}`} value="None" className="h-[18px] w-[81px] bg-[#1b1b1b]" />
      )}
      <Cell>
        <Shy />
      </Cell>
      <Cell>{!row.main && <Sun color="#707070" />}</Cell>
      <Cell>
        <Slash />
      </Cell>
      {row.main ? (
        <Cell>
          <Fx />
        </Cell>
      ) : (
        <span />
      )}
      <span />
      <Cell />
      <Cell />
      <Cell />
    </div>
  );
}

function PropRow({ row }: { row: Extract<Row, { kind: "prop" }> }) {
  return (
    <div className="flex items-center border-b border-[#1f1f1f] bg-[#252525] pt-0.5 pl-1.5 font-['Liberation_Sans',sans-serif] text-[15px]">
      <span className="flex w-4">{row.fx && <Fx />}</span>
      <span className={`flex items-center gap-[9px] ${row.fx ? "ml-[111px]" : "ml-[90px]"}`}>
        <span className="flex w-3 justify-center">{row.open ? <Chevron /> : <ChevronRight />}</span>
        {row.name}
      </span>
      <span className="ml-auto flex w-[185px] text-[#3584d4]">
        {row.reset && (
          <button type="button" className="w-[146px] text-left">
            Reset
          </button>
        )}
        {row.fx && <button type="button">...</button>}
      </span>
    </div>
  );
}

const ticks = ["10f", "20f", "01:00f", "10f", "20f", "02:00f", "10f", "20f"];

const headCell = "flex h-5 items-center border-r border-[#1a1a1a]";

function Timeline() {
  return (
    <section className="flex min-w-0 flex-1 flex-col border border-[#3a8ee0] bg-[#232323] text-[#b0b0b0]">
      <div className="flex h-8 pl-[34px] text-[#8c8c8c]">
        <button type="button" className="h-8 w-[141px] pt-0.5 text-left">Render Queue</button>
        <button type="button" className="h-8 w-[121px] pt-0.5 text-left">Bodymovin</button>
        <div className="flex h-8 items-center border-b-[3px] border-[#b8b8b8] pt-1 pl-0.5">
          <Close />
          <span className="ml-2.5 h-3 w-[13px] bg-[#a89878]" />
          <h2 className="ml-3.5 w-8 text-[#c0c0c0]">color</h2>
          <span className="ml-3">
            <MenuLines />
          </span>
        </div>
      </div>

      <div className="flex flex-1">
        <div className="flex w-[880px] shrink-0 flex-col">
          <div className="flex h-[46px] items-center">
            <div className="w-[135px] pt-1 pl-3.5">
              <p className="pl-[3px] font-['Liberation_Sans',sans-serif] text-xl leading-6 font-bold text-[#2d8ceb]">0:00:00:00</p>
              <p className="leading-[18px] text-[#1f5a94]">00000 (30.00 fps)</p>
            </div>
            <label className="flex h-6 w-[494px] items-center rounded-sm border border-[#2c2c2c] bg-[#161616] pl-2">
              <Icon w={22} h={16}>
                <circle cx="9" cy="6" r="4.5" stroke="#3a8ee0" strokeWidth="1.5" />
                <path d="M6 9.500L1 15" stroke="#3a8ee0" strokeWidth="2" />
                <path d="M14 9h7l-3.500 4z" fill="#3a8ee0" />
              </Icon>
              <input type="text" aria-label="Search layers" defaultValue="color" className="ml-1 flex-1 bg-transparent text-[#c0c0c0] outline-none" />
              <button type="button" aria-label="Clear search" className="mr-1.5">
                <Icon w={10} h={10}>
                  <path d="M1 1l8 8M9 1L1 9" stroke="#e0e0e0" strokeWidth="2" />
                </Icon>
              </button>
            </label>
            <Icon w={22} h={18} className="ml-[18px]">
              <path d="M0 2h6v4H0zM14 2h6v4h-6zM14 10h6v4h-6z" fill={G} />
              <path d="M6 4h8M10 4v8h5" stroke={G} strokeWidth="1.5" />
              <path d="M15 15h6l-3 3z" fill={G} />
            </Icon>
            <Icon w={24} h={22} className="ml-[18px]">
              <path d="M6 0v12M0 6h12M2 2l8 8M10 2l-8 8" stroke={G} strokeWidth="1.2" />
              <path d="M15 8l7 3.500v7L15 22l-7-3.500v-7zM8 11.500l7 3.500 7-3.500M15 15v7" stroke={G} strokeWidth="1.4" fill="#232323" />
            </Icon>
            <Icon w={20} h={16} className="ml-5">
              <path d="M5 6V4.500a5 4.500 0 0110 0V7H5zM0 9h20v7H0z" fill={G} />
              <path d="M10 6v8" stroke="#232323" strokeWidth="2" />
            </Icon>
            <Icon w={20} h={19} className="ml-3.5">
              <path d="M5 0h14v15H5z" fill={G} />
              <path d="M8 1h8v6H8zM8 8h8v6H8z" fill="#5a5a5a" />
              <path d="M3.500 3v13.500H15M1 5v13.500h11" stroke={G} strokeWidth="1.3" />
            </Icon>
            <span className="ml-3.5">
              <Blur />
            </span>
            <Icon w={20} h={20} className="ml-6">
              <path d="M1 3h18v16H1zM4 6c8 0 4 10 12 10M5 0v4M10 0v4M15 0v4" stroke={G} strokeWidth="1.3" />
            </Icon>
          </div>

          <div className={`${columns} h-[25px] border-y border-black bg-[#2b2b2b] pt-[3px] text-xs text-[#a0a0a0]`}>
            <span className="flex items-center gap-1 pl-[7px]">
              <Eye />
              <Icon w={16} h={14}>
                <path d="M0 4h3l4-4v14l-4-4H0z" fill={G} />
                <path d="M9 4c2 1 2 5 0 6M11 1c4 2 4 10 0 12" stroke={G} strokeWidth="1.3" />
              </Icon>
            </span>
            <span className="ml-1 size-[9px] rounded-full bg-[#b2b2b2]" />
            <span className={`${headCell} pl-0.5`}>
              <Lock />
            </span>
            <span />
            <span className={headCell}>
              <Icon w={15} h={15}>
                <path d="M1 2l6-1 8 8-5 5-8-7z" fill={G} />
                <circle cx="4.5" cy="4" r="1.2" fill="#232323" />
              </Icon>
            </span>
            <span className={`${headCell} mr-1`}>#</span>
            <span className={`${headCell} col-span-2 mr-1 pl-[3px]`}>Layer Name</span>
            <span className={`${headCell} col-span-2 mr-1 pl-0.5`}>Parent &amp; Link</span>
            <span className="pl-[3px]">Mode</span>
            <span className="pl-1.5">T</span>
            <span className={`${headCell} mr-1 pl-[3px]`}>TrkMat</span>
            <Shy />
            <Sun color={G} />
            <Icon w={14} h={14}>
              <path d="M1 1l4 4M5 6l3 3M9 10l4 3" stroke={G} strokeWidth="2" />
            </Icon>
            <Fx />
            <Film />
            <Blur />
            <Icon w={16} h={16}>
              <circle cx="8" cy="8" r="6.5" stroke={G} />
              <path d="M12.600 3.400a6.500 6.500 0 01-9.200 9.200z" fill={G} />
            </Icon>
            <Cube />
            <span className="ml-3.5 h-5 w-px bg-[#1a1a1a]" />
          </div>

          <div className="grid h-[319px] auto-rows-fr">
            {rows.map((row) =>
              row.kind === "layer" ? (
                <LayerRow key={row.num} row={row} />
              ) : (
                <PropRow key={row.name} row={row} />
              ),
            )}
          </div>
        </div>

        <div className="relative flex min-w-0 flex-1 flex-col border-l border-black">
          <div className="mt-[9px] mr-5 flex h-3 justify-between rounded-sm bg-[#636363]">
            <span className="w-2 rounded-l-full bg-[#2d8ceb]" />
            <span className="w-2 rounded-r-full bg-[#2d8ceb]" />
          </div>
          <div className="mr-5 flex h-[25px] overflow-hidden border-b border-black pr-[9px] pl-2 font-['Liberation_Sans',sans-serif] text-[15px] text-[#9a9a9a]">
            <div className="grid min-w-0 flex-1 grid-cols-[1fr_2fr_2fr_2fr_2fr_2fr_2fr_2fr_2fr_1fr]">
              <span className="pt-0.5 pl-1.5">0f</span>
              {ticks.map((t, i) => (
                <span key={i} className="flex flex-col items-center pt-0.5">
                  <span className="h-[17px] leading-5">{t}</span>
                  <span className="h-1.5 w-px bg-[#6a6a6a]" />
                </span>
              ))}
              <span className="min-w-0 pt-0.5 pl-[23px]">03:00f</span>
            </div>
          </div>
          <div className="mr-5 flex h-5 justify-between rounded-sm bg-[#5e5e5e]">
            <span className="w-2 rounded-l-md bg-[#2d8ceb]" />
            <span className="w-2 rounded-r-md bg-[#2d8ceb]" />
          </div>
          <div className="mr-[29px] ml-2 h-[5px] border-y border-black bg-[#22aa2c]" />
          <div className="mr-5 grid h-[319px] auto-rows-fr">
            {rows.map((row, i) => (
              <div key={i} className="flex border-b border-[#202020] bg-[#2a2a2a] px-[9px]">
                {row.kind === "prop" ? (
                  <span className="flex-1 bg-[#343434]" />
                ) : (
                  <span className={`flex-1 ${row.main ? "bg-[#7c3a3a]" : "bg-[#535b8b]"}`} />
                )}
              </div>
            ))}
          </div>
          <div className="mr-[29px] ml-2 flex-1 bg-[#2f2f2f]" />

          {/* playhead over the tracks, with the keyframe marks that sit on it */}
          <div className="absolute top-[25px] bottom-0 left-0 flex w-[17px] flex-col items-center">
            <Icon w={15} h={19}>
              <path d="M0 2h15v7L7.500 19 0 9z" fill="#2d8ceb" />
              <path d="M7.500 9v9" stroke="#111" />
            </Icon>
            <span className="w-px flex-1 bg-[#3a8ee0]" />
          </div>
          <div className="absolute top-[92px] left-1 grid h-[107px] w-2.5 auto-rows-fr items-center justify-center">
            {[0, 1, 2, 3, 4].map((i) => (
              <Icon key={i} w={9} h={14}>
                <path d="M0 1h3l1.500 1L6 1h3M4.500 2v10M0 13h3l1.500-1L6 13h3" stroke="#c0c0c0" strokeWidth="1.4" />
              </Icon>
            ))}
          </div>
          <div className="absolute top-[47px] right-0 flex w-[18px] flex-col items-center gap-2">
            <Icon w={14} h={18}>
              <path d="M0 0h14v12l-7 6-7-6z" fill={G} />
            </Icon>
            <Icon w={18} h={16}>
              <path d="M9 2h9v10H9z" fill={G} />
              <path d="M1 11L9 1v9" stroke={G} strokeWidth="1.5" />
              <circle cx="8" cy="11" r="4" stroke={G} strokeWidth="1.5" fill="#232323" />
            </Icon>
          </div>
        </div>
      </div>

      <footer className="flex h-[21px] items-center border-t-2 border-[#0a0a0a]">
        <div className="flex w-[880px] shrink-0 gap-2 pl-2">
          <Icon w={15} h={14}>
            <path d="M1 1h8v7H1zM4 4h8v7H4zM7 7h7v6H7z" stroke="#3a8ee0" strokeWidth="1.3" />
          </Icon>
          <Icon w={15} h={14}>
            <circle cx="6" cy="5" r="4.5" stroke="#3a8ee0" strokeWidth="1.3" />
            <path d="M6 6h8v7H6z" stroke="#3a8ee0" strokeWidth="1.3" />
          </Icon>
          <Icon w={16} h={14}>
            <path d="M5 0H3v5L1 7l2 2v5h2M11 0h2v5l2 2-2 2v5h-2" stroke={G} strokeWidth="1.3" />
            <path d="M5 0h6v14H5z" fill="#8c8c8c" />
          </Icon>
        </div>
        <Icon w={12} h={6} className="ml-1.5">
          <path d="M0 5l3-3 1.500 1L7 0l5 5z" fill={G} />
        </Icon>
        <input
          type="range"
          aria-label="Timeline zoom"
          defaultValue={0}
          className="ml-3.5 h-3 w-[60px] appearance-none bg-transparent [&::-webkit-slider-runnable-track]:h-0.5 [&::-webkit-slider-runnable-track]:bg-[#484848] [&::-webkit-slider-thumb]:-mt-[5px] [&::-webkit-slider-thumb]:size-3 [&::-webkit-slider-thumb]:appearance-none [&::-webkit-slider-thumb]:rounded-full [&::-webkit-slider-thumb]:border-2 [&::-webkit-slider-thumb]:border-[#8e8e8e] [&::-webkit-slider-thumb]:bg-[#232323]"
        />
        <Icon w={20} h={10} className="ml-4">
          <path d="M0 9l4-6 2 1-2 5zM5 9l7-9 8 9z" fill={G} />
        </Icon>
      </footer>
    </section>
  );
}

/* ---------- paragraph ---------- */

const justify = [
  "M0 1h16M0 4.5h20M0 8h16M0 11.5h20M0 15h16",
  "M3 1h14M0 4.5h20M3 8h14M0 11.5h20M3 15h14",
  "M4 1h16M0 4.5h20M4 8h16M0 11.5h20M4 15h16",
  "M0 1h19M0 4.5h19M0 8h19M0 11.5h19M0 15h12",
  "M0 1h19M0 4.5h19M0 8h19M0 11.5h19M4 15h11",
  "M0 1h19M0 4.5h19M0 8h19M0 11.5h19M7 15h12",
  "M0 1h19M0 4.5h19M0 8h19M0 11.5h19M0 15h19",
];

const indents = [
  { id: "left", d: "M0 9h6M4 6l3 3-3 3M9 1v18M11 3h9M11 7h7M11 11h9M11 15h7" },
  { id: "before", d: "M0 5h6M4 2l3 3-3 3M9 2h11v6H9zM9 12h11M9 15h8M9 18h11" },
  { id: "first", d: "M0 3h6M4 0l3 3-3 3M11 3h9M8 8h12M8 12h12M8 16h12M8 19h12" },
  { id: "right", d: "M1 3h8M1 7h6M1 11h8M1 15h6M12 1v18M20 10h-5M17 7l-3 3 3 3" },
  { id: "after", d: "M0 15h6M4 12l3 3-3 3M9 12h11v6H9zM9 2h11M9 5h8M9 8h11" },
];

function Paragraph() {
  return (
    <section className="flex w-[258px] shrink-0 flex-col bg-[#232323] text-[#8c8c8c]">
      <div className="flex h-9 items-start">
        <span className="flex h-8 w-[105px] items-center overflow-hidden pt-1">
          <span className="-ml-[7px]">Crosshair</span>
        </span>
        <div className="flex h-8 items-center gap-4 border-b-[3px] border-[#b8b8b8] pt-1 pl-0.5 text-[#c0c0c0]">
          <h2>Paragraph</h2>
          <MenuLines />
        </div>
        <button type="button" aria-label="More panels" className="mt-3 mr-1 ml-auto">
          <More />
        </button>
      </div>
      <div className="flex h-[38px] items-center gap-[5px] pl-2">
        {justify.map((d, i) => (
          <button
            type="button"
            key={d}
            aria-label="Text alignment"
            className={`flex h-[27px] w-[27px] items-center justify-center rounded-sm ${i === 1 ? "bg-[#161616] text-[#3a8ee0]" : "text-[#b2b2b2]"} ${i === 3 || i === 6 ? "ml-[3px]" : ""}`}
          >
            <Icon w={20} h={16}>
              <path d={d} stroke="currentColor" strokeWidth="1.4" />
            </Icon>
          </button>
        ))}
      </div>
      <Rule />
      <div className="grid grid-cols-[90px_82px_1fr] gap-y-0.5 pt-[3px] pl-2">
        {indents.map((f) => (
          <span key={f.id} className="flex h-5 items-center gap-1">
            <Icon>
              <path d={f.d} stroke={G} strokeWidth="1.2" />
            </Icon>
            <a href={`#indent-${f.id}`} className="pl-0.5 text-[#3a8ee0]">
              0
            </a>
            px
          </span>
        ))}
        <span className="flex items-center gap-1">
          <button type="button" aria-label="Left to right" className="flex h-6 w-[27px] items-center justify-center rounded-sm bg-[#161616]">
            <Icon w={22} h={16}>
              <path d="M1 3l6 5-6 5z" fill="#2d8ceb" />
              <path d="M21 1h-7a4 4 0 000 8h1v6h2V3h2v12h1.500z" fill="#2d8ceb" />
            </Icon>
          </button>
          <button type="button" aria-label="Right to left">
            <Icon w={22} h={16}>
              <path d="M13 1H5a4 4 0 000 8h1v6h2V3h2v12h1.500V3H13z" fill={G} />
              <path d="M21 3l-6 5 6 5z" fill={G} />
            </Icon>
          </button>
        </span>
      </div>
    </section>
  );
}

/* ---------- task bar ---------- */

const apps: { name: string; art: ReactNode; active?: boolean }[] = [
  {
    name: "File Explorer",
    art: (
      <>
        <path d="M1 2h10l2 3h14v21H1z" fill="#f0c34c" />
        <path d="M1 6h27v18H1z" fill="#fde28e" />
        <path d="M6 26v-9h18v9h-5v-4h-8v4z" fill="#3ea8dc" />
      </>
    ),
  },
  {
    name: "Chrome",
    art: (
      <>
        <circle cx="14" cy="14" r="13.5" fill="#fbc634" />
        <path d="M14 14L2.300 7.300A13.500 13.500 0 0014 27.500l6-10z" fill="#149a52" />
        <path d="M2.300 7.300A13.500 13.500 0 0125.700 7.300H14L8 15z" fill="#db4437" />
        <circle cx="14" cy="14" r="6.5" fill="#f3f3f3" />
        <circle cx="14" cy="14" r="5" fill="#4a84f0" />
      </>
    ),
  },
  {
    name: "Transfer",
    art: (
      <>
        <path d="M0 0h17l5 5v19H6l-6-6z" fill="#0b4560" />
        <path d="M4 5h18l6 6v17H9l-5-5z" fill="#0bc6e0" />
        <path d="M4 5h13l7 7v6l-6 6H9l-5-5z" fill="#fff" />
        <path d="M4 11h7v3h7v-3l6 5-6 5v-3H4z" fill="#0bc6e0" />
        <path d="M8 14.500h8V11l7 5-7 5v-3.500H8z" fill="#fff" />
      </>
    ),
  },
  {
    name: "Word",
    art: (
      <>
        <path d="M8 1h20v7H8z" fill="#41a5ee" />
        <path d="M8 8h20v7H8z" fill="#2b7cd3" />
        <path d="M8 15h20v6H8z" fill="#185abd" />
        <path d="M8 21h20v7H8z" fill="#103f91" />
        <rect y="7" width="15" height="15" rx="1" fill="#1a56b4" />
        <path d="M3 11l2 8 2.500-7L10 19l2-8" stroke="#fff" strokeWidth="1.6" />
      </>
    ),
  },
  { name: "After Effects", art: null, active: true },
  {
    name: "Sublime Text",
    art: (
      <>
        <rect width="28" height="28" rx="2" fill="#4c4c4c" />
        <path d="M21 5v5l-8 3 8 2v6L7 25v-5l8-3-8-2.500V9z" fill="#ff9800" />
      </>
    ),
  },
];

function TaskBar() {
  return (
    <footer className="grid h-[50px] grid-cols-[1fr_auto_1fr] items-center bg-[#060c14] font-['Noto_Sans','Noto_Sans_CJK_SC',sans-serif] text-[15px] text-white">
      <div className="flex items-center">
        <button type="button" aria-label="Start" className="flex w-[60px] justify-center">
          <Icon w={20} h={20}>
            <path d="M0 3l8-1v8H0zM9 1.800L20 0v10H9zM0 11h8v8l-8-1zM9 11h11v9L9 18.500z" fill="#fff" />
          </Icon>
        </button>
        <button type="button" aria-label="Task view" className="flex w-[60px] justify-center">
          <Icon w={20} h={20}>
            <path d="M1 0v3h12V0M1 20v-3h12v3M.5 5.500h13v9H.5zM18.500 0v5M18.500 11v9" stroke="#fff" strokeWidth="1.2" />
            <path d="M17 6h3v3h-3z" fill="#fff" />
          </Icon>
        </button>
        <div className="ml-[3px] flex">
          {apps.map((app) => (
            <button
              type="button"
              key={app.name}
              aria-label={app.name}
              className={`flex h-[50px] w-[62px] flex-col items-center pt-2.5 ${app.active ? "bg-[#3c4046]" : ""}`}
            >
              {app.active ? (
                <span className="flex size-7 items-center justify-center border-2 border-[#c58cf5] bg-[#25003d] text-[15px] leading-none text-[#d6a3ff]">
                  Ae
                </span>
              ) : (
                <Icon w={28} h={28}>
                  {app.art}
                </Icon>
              )}
              <span className={`mt-auto h-[3px] bg-[#7cb6e6] ${app.active ? "w-full" : "w-[51px]"}`} />
            </button>
          ))}
        </div>
      </div>

      <div className="flex items-center pt-4 text-[13px] text-[#6c7278]">
        <Icon w={20} h={22}>
          <path d="M10 0l9.500 5.500v11L10 22 .5 16.500v-11z" fill="#6c7278" />
          <path d="M4.500 7v5q0 3 3 3t3-3V7M14.500 7v8.500" stroke="#0a1118" strokeWidth="2.2" />
        </Icon>
        <span className="ml-0.5">·cn</span>
      </div>

      <div className="flex items-center justify-end">
        <Icon w={18} h={20}>
          <circle cx="13" cy="4" r="3.2" stroke="#fff" strokeWidth="1.4" />
          <circle cx="5.5" cy="11" r="3.2" stroke="#fff" strokeWidth="1.4" />
          <path d="M9 11c1-5 8-4 8.500 1M1 19c1-6 8-6 9 0" stroke="#fff" strokeWidth="1.4" />
        </Icon>
        <Icon w={16} h={10} className="ml-7">
          <path d="M0 9l8-8 8 8" stroke="#fff" strokeWidth="1.3" />
        </Icon>
        <Icon w={22} h={16} className="ml-3">
          <path d="M1 5.500h3l5-4v13l-5-4H1z" stroke="#fff" strokeWidth="1.2" />
          <path d="M12 5c1 2 1 4 0 6M15 3c2 3 2 7 0 10M18 1c3 4 3 10 0 14" stroke="#fff" strokeWidth="1.2" />
        </Icon>
        <span className="ml-2.5 text-base">中</span>
        <span className="ml-[18px] flex size-[18px] items-center justify-center bg-white text-[15px] leading-none text-black">拼</span>
        <div className="ml-3 w-20 text-center text-base leading-[23px]">
          <p>0:19</p>
          <p>2019/10/8</p>
        </div>
        <span className="relative mr-6 ml-[30px]">
          <Icon w={20} h={19}>
            <path d="M0 0h20v15h-6l-4 4v-4H0z" fill="#fff" />
            <path d="M4 4h12M4 7.500h12M4 11h8" stroke="#060c14" strokeWidth="1.4" />
          </Icon>
          <span className="absolute top-2.5 left-2.5 flex size-[19px] items-center justify-center rounded-full border border-[#707070] bg-[#333] text-[13px] font-bold leading-none">
            3
          </span>
        </span>
        <span className="mr-[5px] h-[50px] w-px bg-[#6a6e74]" />
      </div>
    </footer>
  );
}

export default function App() {
  return (
    <div className="flex min-h-screen flex-col bg-[#161616] font-['Lato','Noto_Sans_CJK_SC',sans-serif] text-sm leading-5 whitespace-nowrap">
      <TitleBar />
      <ToolBar />
      <main className="flex flex-1 flex-col gap-1.5 px-px pt-[3px] pb-px">
        <div className="flex flex-1 gap-1.5">
          <EffectControls />
          <Viewer />
          <SideColumn />
        </div>
        <div className="flex h-[560px] gap-1.5">
          <MotionTools />
          <SnapPanel />
          <Timeline />
          <Paragraph />
        </div>
      </main>
      <TaskBar />
    </div>
  );
}
